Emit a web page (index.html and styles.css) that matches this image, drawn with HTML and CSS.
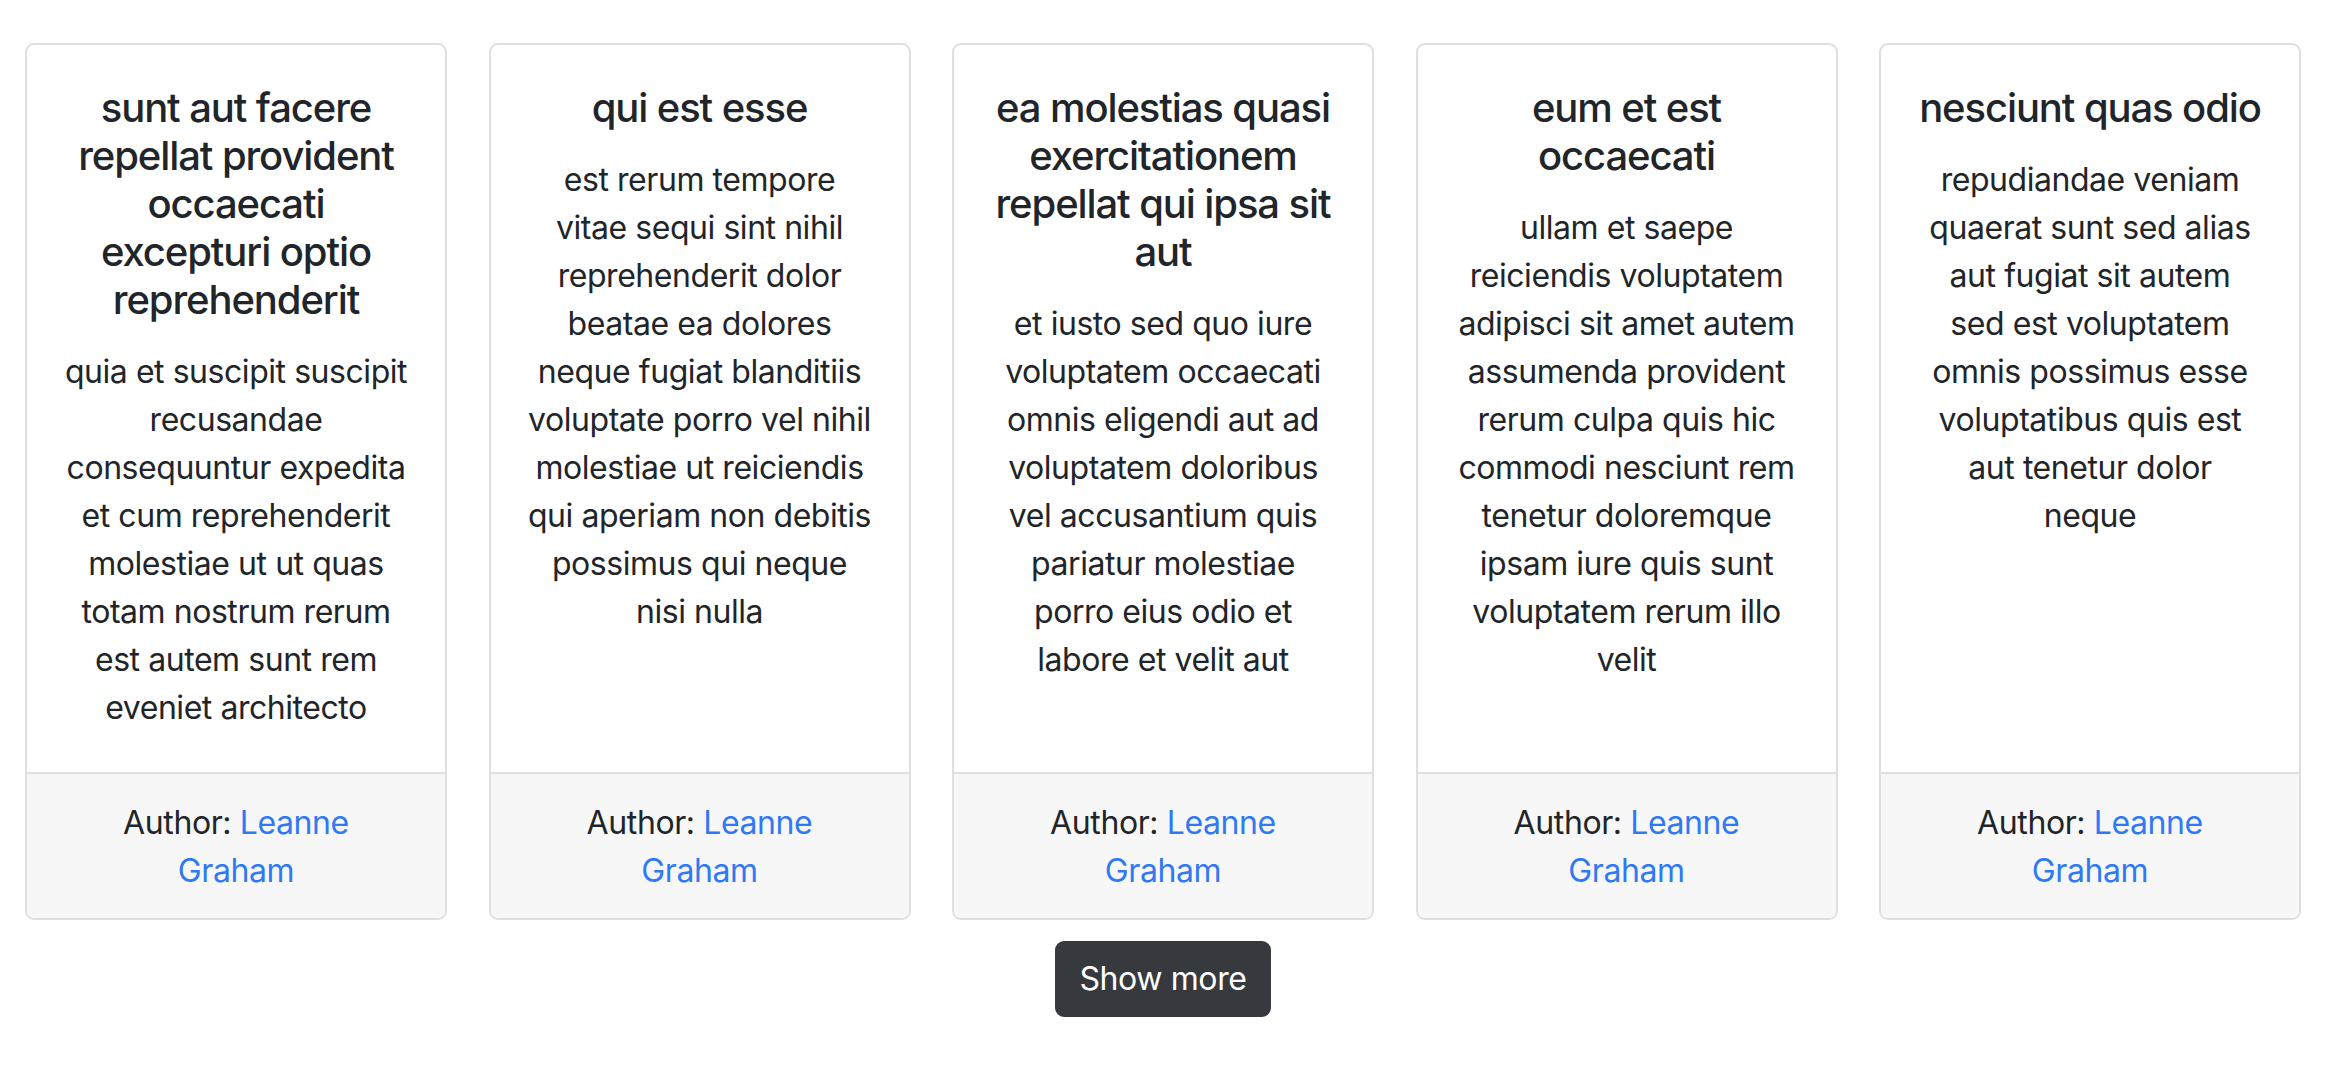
FILE: index.html
```html
<!DOCTYPE html>
<html lang="en">
<head>
<meta charset="utf-8">
<title>Posts</title>
<link rel="stylesheet" href="styles.css">
</head>
<body>
<main class="page">
  <section class="cards">
    <article class="card">
      <div class="card-body">
        <h5 class="card-title">sunt aut facere<br>repellat provident<br>occaecati<br>excepturi optio<br>reprehenderit</h5>
        <p class="card-text">quia et suscipit suscipit<br>recusandae<br>consequuntur expedita<br>et cum reprehenderit<br>molestiae ut ut quas<br>totam nostrum rerum<br>est autem sunt rem<br>eveniet architecto</p>
      </div>
      <div class="card-footer">Author: <a class="author" href="#">Leanne<br>Graham</a></div>
    </article>
    <article class="card">
      <div class="card-body">
        <h5 class="card-title">qui est esse</h5>
        <p class="card-text">est rerum tempore<br>vitae sequi sint nihil<br>reprehenderit dolor<br>beatae ea dolores<br>neque fugiat blanditiis<br>voluptate porro vel nihil<br>molestiae ut reiciendis<br>qui aperiam non debitis<br>possimus qui neque<br>nisi nulla</p>
      </div>
      <div class="card-footer">Author: <a class="author" href="#">Leanne<br>Graham</a></div>
    </article>
    <article class="card">
      <div class="card-body">
        <h5 class="card-title">ea molestias quasi<br>exercitationem<br>repellat qui ipsa sit<br>aut</h5>
        <p class="card-text">et iusto sed quo iure<br>voluptatem occaecati<br>omnis eligendi aut ad<br>voluptatem doloribus<br>vel accusantium quis<br>pariatur molestiae<br>porro eius odio et<br>labore et velit aut</p>
      </div>
      <div class="card-footer">Author: <a class="author" href="#">Leanne<br>Graham</a></div>
    </article>
    <article class="card">
      <div class="card-body">
        <h5 class="card-title">eum et est<br>occaecati</h5>
        <p class="card-text">ullam et saepe<br>reiciendis voluptatem<br>adipisci sit amet autem<br>assumenda provident<br>rerum culpa quis hic<br>commodi nesciunt rem<br>tenetur doloremque<br>ipsam iure quis sunt<br>voluptatem rerum illo<br>velit</p>
      </div>
      <div class="card-footer">Author: <a class="author" href="#">Leanne<br>Graham</a></div>
    </article>
    <article class="card">
      <div class="card-body">
        <h5 class="card-title">nesciunt quas odio</h5>
        <p class="card-text">repudiandae veniam<br>quaerat sunt sed alias<br>aut fugiat sit autem<br>sed est voluptatem<br>omnis possimus esse<br>voluptatibus quis est<br>aut tenetur dolor<br>neque</p>
      </div>
      <div class="card-footer">Author: <a class="author" href="#">Leanne<br>Graham</a></div>
    </article>
  </section>
  <div class="actions">
    <button class="btn-more" type="button">Show more</button>
  </div>
</main>
</body>
</html>
```

FILE: styles.css
```css
html, body {
  margin: 0;
  padding: 0;
  background: #ffffff;
}

body {
  font-family: Inter, "Noto Sans", "Liberation Sans", sans-serif;
  color: #212529;
  font-size: 32px;
  line-height: 48px;
}

.page {
  padding-top: 43px;
}

.cards {
  display: flex;
  align-items: stretch;
  gap: 41.5px;
  padding: 0 25px;
}

.card {
  flex: 1 1 0;
  min-width: 0;
  display: flex;
  flex-direction: column;
  border: 2px solid #dfdfdf;
  border-radius: 9px;
  background: #ffffff;
  text-align: center;
  overflow: hidden;
}

.card-body {
  flex: 1 1 auto;
  padding: 39px 24px 40px;
}

.card-title {
  margin: 0 0 24px;
  font-size: 40px;
  line-height: 48px;
  font-weight: 500;
  letter-spacing: -1.1px;
}

.card-text {
  margin: 0;
  letter-spacing: -0.45px;
}

.card-footer {
  background: #f7f7f7;
  border-top: 2px solid #dfdfdf;
  padding: 25px 32px 23px;
  letter-spacing: -0.4px;
}

.author {
  color: #3079f5;
  text-decoration: none;
}

.actions {
  display: flex;
  justify-content: center;
  margin-top: 21px;
}

.btn-more {
  font-family: inherit;
  font-size: 32px;
  line-height: 48px;
  letter-spacing: -0.4px;
  color: #ffffff;
  background: #363a3f;
  border: 2px solid #363a3f;
  border-radius: 9px;
  padding: 12px 22px;
  cursor: pointer;
}
```
